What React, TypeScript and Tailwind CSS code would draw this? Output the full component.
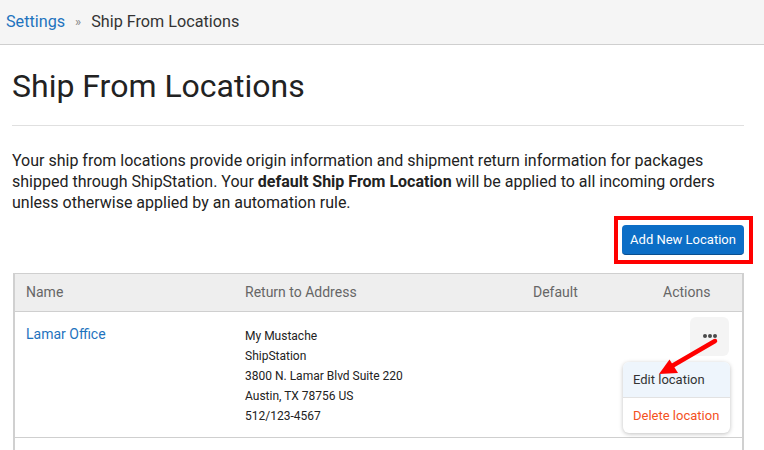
import React from 'react'

const FONT = { fontFamily: 'Roboto, "Liberation Sans", Arial, sans-serif' }

const address = ['My Mustache', 'ShipStation', '3800 N. Lamar Blvd Suite 220', 'Austin, TX 78756 US', '512/123-4567']

function ActionsMenu() {
  return (
    <div className="relative flex justify-end pr-[13px] pt-[5px]">
      <button className="w-[39px] h-[39px] rounded-md bg-[#f4f4f4] flex items-center justify-center gap-[1px] pb-[2px]">
        <span className="w-[4px] h-[4px] rounded-full bg-[#4a4a4a]" />
        <span className="w-[4px] h-[4px] rounded-full bg-[#4a4a4a]" />
        <span className="w-[4px] h-[4px] rounded-full bg-[#4a4a4a]" />
      </button>
      {/* dropdown */}
      <div className="absolute right-[12px] top-[50px] w-[107px] bg-white rounded-md shadow-[0_1px_4px_rgba(0,0,0,0.25)] overflow-hidden text-[13px]">
        <div className="h-[36px] flex items-center pl-[10px] bg-[#eef5fc] text-[#333] border-b border-[#e2e2e2]">Edit location</div>
        <div className="h-[35px] flex items-center pl-[10px] text-[#f4511e]">Delete location</div>
      </div>
    </div>
  )
}

export default function App() {
  return (
    <div className="relative w-[764px] h-[450px] overflow-hidden bg-white text-[#222]" style={FONT}>
      {/* Breadcrumb */}
      <div className="h-[45px] bg-[#f5f5f5] border-b border-[#cfcfcf] flex items-center pl-[6px] text-[16.2px]">
        <span className="text-[#1e73be]">Settings</span>
        <span className="text-[#888] text-[13px] mx-[10px]">»</span>
        <span className="text-[#333]">Ship From Locations</span>
      </div>

      <div className="pl-[12px] pr-[20px]">
        <h1 className="text-[32px] leading-[36px] mt-[23px] text-[#222]">Ship From Locations</h1>
        <div className="mt-[21px] border-t border-[#e0e0e0]" />

        <p className="mt-[24px] text-[16px] leading-[21px] text-[#222]">
          Your ship from locations provide origin information and shipment return information for packages
          shipped through ShipStation. Your <b className="font-bold">default Ship From Location</b> will be applied
          to all incoming orders unless otherwise applied by an automation rule.
        </p>

        <div className="flex justify-end mt-[12px]">
          <div className="relative">
            <button className="h-[30px] w-[122px] rounded bg-[#0c6ec6] border-b border-[#0a4f8f] text-white text-[13px]">
              Add New Location
            </button>
            <div className="absolute left-[-8px] right-[-9px] top-[-9px] bottom-[-9px] border-[4px] border-[#ff0000]" />
          </div>
        </div>

        {/* Table */}
        <div className="mt-[18px] ml-[1px] border-x-2 border-[#d0d0d0] h-[200px]">
          <div className="grid grid-cols-[219px_287px_130px_1fr] h-[39px] items-center bg-[#eeeeee] border-y border-[#cfcfcf] text-[14px] text-[#666]">
            <div className="pl-[11px]">Name</div>
            <div className="pl-[11px]">Return to Address</div>
            <div className="pl-[12px]">Default</div>
            <div className="pl-[12px]">Actions</div>
          </div>
          <div className="grid grid-cols-[219px_287px_130px_1fr] h-[126px] border-b border-[#cfcfcf]">
            <div className="pl-[11px] pt-[12px] text-[14px] text-[#1e73be]">Lamar Office</div>
            <div className="pl-[11px] pt-[14px] text-[12px] leading-[20px] text-[#222]">
              {address.map((line) => (
                <div key={line}>{line}</div>
              ))}
            </div>
            <div />
            <ActionsMenu />
          </div>
        </div>
      </div>

      {/* annotation arrow */}
      <svg className="absolute left-0 top-0 pointer-events-none" width="764" height="450">
        <line x1="715" y1="341" x2="672" y2="366" stroke="#ff0000" strokeWidth="4.5" strokeLinecap="round" />
        <polygon points="659,374 669.5,359.5 678,373" fill="#ff0000" />
      </svg>
    </div>
  )
}
